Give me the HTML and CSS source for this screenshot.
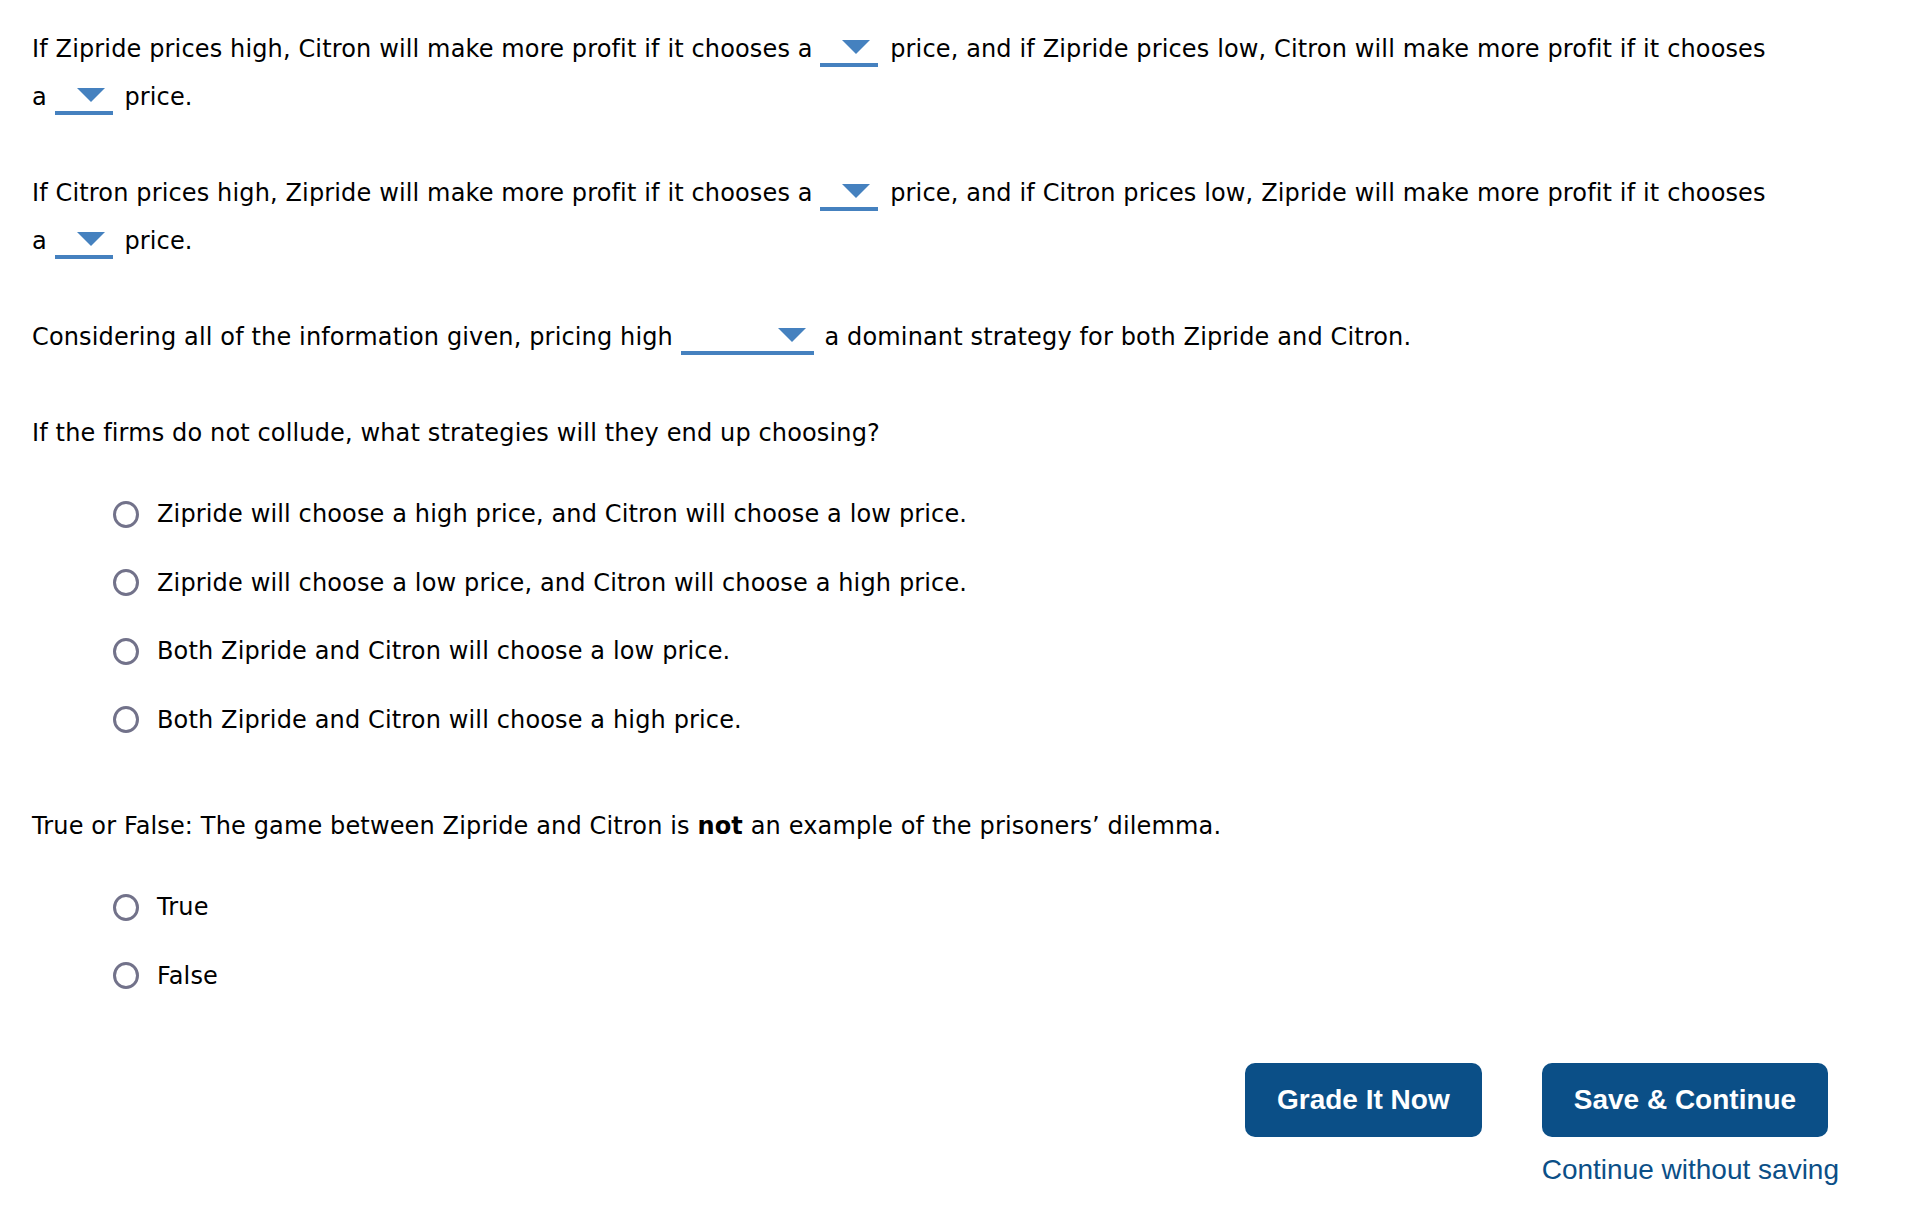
FILE: index.html
```html
<!DOCTYPE html>
<html lang="en">
<head>
  <meta charset="UTF-8" />
  <title>Question</title>
  <link rel="stylesheet" href="styles.css">
</head>
<body>
  <div class="quiz">
    <p class="q">If Zipride prices high, Citron will make more profit if it chooses a <span class="drop"></span> price, and if Zipride prices low, Citron will make more profit if it chooses a <span class="drop"></span> price.</p>
    <p class="q">If Citron prices high, Zipride will make more profit if it chooses a <span class="drop"></span> price, and if Citron prices low, Zipride will make more profit if it chooses a <span class="drop"></span> price.</p>
    <p class="q">Considering all of the information given, pricing high <span class="drop wide"></span> a dominant strategy for both Zipride and Citron.</p>
    <p class="q">If the firms do not collude, what strategies will they end up choosing?</p>

    <div class="choices">
      <label class="choice"><input type="radio" name="collude"> Zipride will choose a high price, and Citron will choose a low price.</label>
      <label class="choice"><input type="radio" name="collude"> Zipride will choose a low price, and Citron will choose a high price.</label>
      <label class="choice"><input type="radio" name="collude"> Both Zipride and Citron will choose a low price.</label>
      <label class="choice"><input type="radio" name="collude"> Both Zipride and Citron will choose a high price.</label>
    </div>

    <p class="q">True or False: The game between Zipride and Citron is <b>not</b> an example of the prisoners’ dilemma.</p>

    <div class="choices last">
      <label class="choice"><input type="radio" name="tf"> True</label>
      <label class="choice"><input type="radio" name="tf"> False</label>
    </div>
  </div>

  <div class="actions">
    <button class="btn">Grade It Now</button>
    <div class="save">
      <button class="btn">Save &amp; Continue</button>
      <a href="#" class="skip">Continue without saving</a>
    </div>
  </div>
</body>
</html>
```

FILE: styles.css
```css
* { box-sizing: border-box; }
body {
  margin: 0;
  background: #fff;
  color: #000;
  font-family: Verdana, 'DejaVu Sans', sans-serif;
  font-size: 24px;
}
.quiz {
  width: 1780px;
  padding: 25px 0 0 32px;
  letter-spacing: 0.14px;
}
.q {
  margin: 0;
  line-height: 48px;
}
.q + .q { margin-top: 48px; }

/* blank select boxes */
.drop {
  display: inline-block;
  position: relative;
  width: 58px;
  height: 27px;
  margin-right: 4px;
  border-bottom: 4px solid #4581bf;
  vertical-align: -10px;
}
.drop::after {
  content: '';
  position: absolute;
  top: 0;
  right: 8px;
  border-left: 14px solid transparent;
  border-right: 14px solid transparent;
  border-top: 14px solid #4581bf;
}
.drop.wide { width: 133px; margin-right: 3px; }

.choices {
  display: flex;
  flex-direction: column;
  gap: 20.5px;
  margin: 33px 0 58.5px;
  padding-left: 81px;
}
.choices.last { margin-bottom: 0; }
.choice {
  display: flex;
  align-items: center;
  height: 48px;
  gap: 18px;
}
.choice input {
  appearance: none;
  margin: 0;
  width: 26px;
  height: 27px;
  border: 3.5px solid #72728a;
  border-radius: 50%;
  background: #fff;
}

.actions {
  display: flex;
  justify-content: flex-end;
  align-items: flex-start;
  gap: 60px;
  margin-top: 63px;
  padding-right: 93px;
  font-family: 'Liberation Sans', Arial, sans-serif;
}
.save {
  display: flex;
  flex-direction: column;
  align-items: flex-start;
}
.btn {
  height: 74px;
  padding: 0 32px;
  border: none;
  border-radius: 10px;
  background: #0b4f87;
  color: #fff;
  font-family: inherit;
  font-size: 28px;
  font-weight: bold;
  cursor: pointer;
}
.skip {
  margin-top: 17px;
  color: #0b4f87;
  font-size: 28px;
  line-height: 32px;
  text-decoration: none;
}
```
